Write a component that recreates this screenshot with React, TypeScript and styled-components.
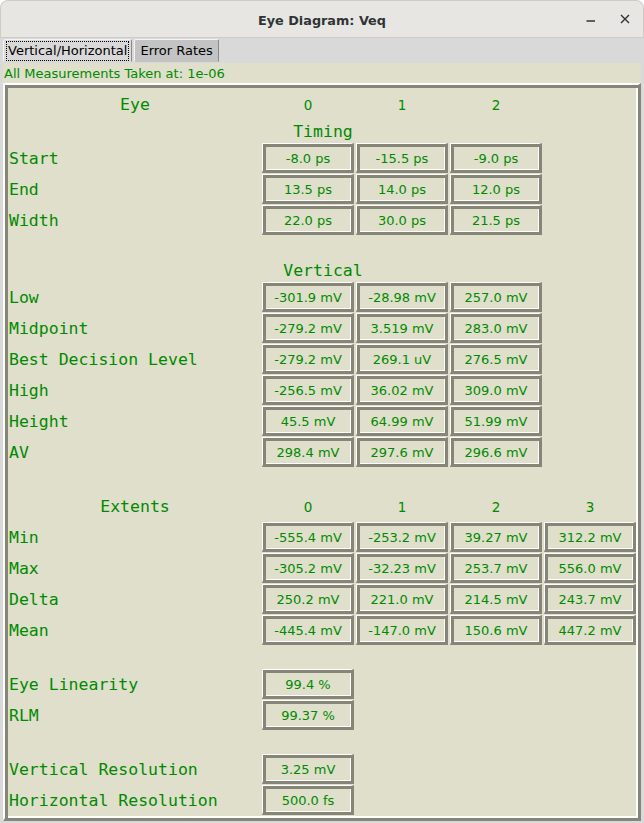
import React from "react";
import styled, { createGlobalStyle } from "styled-components";

const GREEN = "#008a00";
const BEIGE = "#dfdfcb";
const SHADE = "#858578";

const GlobalStyle = createGlobalStyle`
  html, body { margin: 0; padding: 0; background: #ffffff; }
  body { width: 644px; height: 823px; overflow: hidden; }
  #root { width: 644px; height: 823px; }
`;

const Window = styled.div`
  width: 644px;
  height: 823px;
  display: flex;
  flex-direction: column;
  background: #d9d9d9;
  border-radius: 8px 8px 0 0;
  overflow: hidden;
  box-sizing: border-box;
`;

const TitleBar = styled.div`
  height: 38px;
  box-sizing: border-box;
  display: grid;
  grid-template-columns: 1fr auto 1fr;
  align-items: center;
  background: #e8e6e3;
  border: 1px solid #cfccc8;
  border-radius: 8px 8px 0 0;
`;

const Title = styled.div`
  grid-column: 2;
  padding-top: 2px;
  font-family: "DejaVu Sans", sans-serif;
  font-weight: bold;
  font-size: 12.8px;
  color: #2e3436;
`;

const Controls = styled.div`
  grid-column: 3;
  justify-self: end;
  display: flex;
  gap: 4px;
  padding-right: 3px;
`;

const CtlButton = styled.div`
  width: 30px;
  height: 30px;
  display: flex;
  align-items: center;
  justify-content: center;
`;

const TabBar = styled.div`
  height: 24px;
  display: flex;
  align-items: flex-end;
  padding-left: 3px;
  background: #d9d9d9;
`;

const Tab = styled.div<{ $active?: boolean }>`
  height: 23px;
  box-sizing: border-box;
  display: flex;
  align-items: center;
  padding: 0 ${(p) => (p.$active ? "2px" : "5px")};
  margin-right: ${(p) => (p.$active ? "2px" : "0")};
  background: ${(p) => (p.$active ? "#d9d9d9" : "#c3c3c3")};
  border: 1px solid;
  border-color: #f4f4f4 #8a8a8a transparent #f4f4f4;
  border-radius: 2px 2px 0 0;
  font-family: "DejaVu Sans", sans-serif;
  font-size: 13px;
  color: #000;
`;

const Focus = styled.span`
  border: 1px dotted #000;
  padding: 1px 1px;
  line-height: 16px;
`;

const Page = styled.div`
  flex: 1;
  display: flex;
  flex-direction: column;
  padding: 1px 3px 2px 3px;
  min-height: 0;
`;

const InfoLabel = styled.div`
  height: 20px;
  line-height: 21px;
  padding-left: 1px;
  background: ${BEIGE};
  font-family: "DejaVu Sans", sans-serif;
  font-size: 13px;
  color: ${GREEN};
  white-space: nowrap;
`;

const Panel = styled.div`
  flex: 1;
  background: ${BEIGE};
  border-style: solid;
  border-width: 2px 3px 3px 2px;
  border-color: #ffffff ${SHADE} ${SHADE} #ffffff;
  box-shadow: inset 3px 3px 0 ${SHADE}, inset -2px -2px 0 #ffffff;
  padding: 3px 2px 2px 4px;
  min-height: 0;
`;

const Grid = styled.div`
  display: grid;
  grid-template-columns: 252px repeat(4, 94px);
  align-items: start;
`;

const Header = styled.div<{ $span: "label" | "all"; $h: number; $pt?: number }>`
  grid-column: ${(p) => (p.$span === "all" ? "1 / -1" : "1")};
  height: ${(p) => p.$h}px;
  box-sizing: border-box;
  padding-top: ${(p) => (p.$pt ?? 0) + 1}px;
  line-height: 24px;
  text-align: center;
  font-family: "DejaVu Sans Mono", monospace;
  font-size: 16.5px;
  color: ${GREEN};
`;

const ColHead = styled.div<{ $h: number; $pt?: number }>`
  height: ${(p) => p.$h}px;
  box-sizing: border-box;
  padding-top: ${(p) => (p.$pt ?? 0) + 1}px;
  line-height: 24px;
  text-align: center;
  font-family: "DejaVu Sans", sans-serif;
  font-size: 13.5px;
  color: ${GREEN};
`;

const Label = styled.div`
  grid-column: 1;
  height: 31px;
  box-sizing: border-box;
  padding-top: 1px;
  line-height: 30px;
  font-family: "DejaVu Sans Mono", monospace;
  font-size: 16.5px;
  color: ${GREEN};
  white-space: nowrap;
`;

const Value = styled.div`
  width: 92px;
  height: 30px;
  margin: 0 1px 1px 1px;
  box-sizing: border-box;
  border-style: solid;
  border-width: 1px 3px 3px 1px;
  border-color: #ffffff ${SHADE} ${SHADE} #ffffff;
  box-shadow: inset 3px 3px 0 ${SHADE}, inset -1px -1px 0 #ffffff;
  display: flex;
  align-items: center;
  justify-content: center;
  padding: 2px 0 0 2px;
  font-family: "DejaVu Sans", sans-serif;
  font-size: 13px;
  color: ${GREEN};
  white-space: nowrap;
`;

const Spacer = styled.div<{ $h: number }>`
  grid-column: 1 / -1;
  height: ${(p) => p.$h}px;
`;

type Row = [string, string[]];

const timing: Row[] = [
  ["Start", ["-8.0 ps", "-15.5 ps", "-9.0 ps"]],
  ["End", ["13.5 ps", "14.0 ps", "12.0 ps"]],
  ["Width", ["22.0 ps", "30.0 ps", "21.5 ps"]],
];

const vertical: Row[] = [
  ["Low", ["-301.9 mV", "-28.98 mV", "257.0 mV"]],
  ["Midpoint", ["-279.2 mV", "3.519 mV", "283.0 mV"]],
  ["Best Decision Level", ["-279.2 mV", "269.1 uV", "276.5 mV"]],
  ["High", ["-256.5 mV", "36.02 mV", "309.0 mV"]],
  ["Height", ["45.5 mV", "64.99 mV", "51.99 mV"]],
  ["AV", ["298.4 mV", "297.6 mV", "296.6 mV"]],
];

const extents: Row[] = [
  ["Min", ["-555.4 mV", "-253.2 mV", "39.27 mV", "312.2 mV"]],
  ["Max", ["-305.2 mV", "-32.23 mV", "253.7 mV", "556.0 mV"]],
  ["Delta", ["250.2 mV", "221.0 mV", "214.5 mV", "243.7 mV"]],
  ["Mean", ["-445.4 mV", "-147.0 mV", "150.6 mV", "447.2 mV"]],
];

const linearity: Row[] = [
  ["Eye Linearity", ["99.4 %"]],
  ["RLM", ["99.37 %"]],
];

const resolution: Row[] = [
  ["Vertical Resolution", ["3.25 mV"]],
  ["Horizontal Resolution", ["500.0 fs"]],
];

function Rows({ rows }: { rows: Row[] }) {
  return (
    <>
      {rows.map(([name, vals]) => (
        <React.Fragment key={name}>
          <Label>{name}</Label>
          {vals.map((v, i) => (
            <Value key={i}>{v}</Value>
          ))}
        </React.Fragment>
      ))}
    </>
  );
}

export default function App() {
  return (
    <>
      <GlobalStyle />
      <Window>
        <TitleBar>
          <Title>Eye Diagram: Veq</Title>
          <Controls>
            <CtlButton>
              <svg width="10" height="10" viewBox="0 0 10 10">
                <line x1="0.5" y1="7" x2="9" y2="7" stroke="#2e3436" strokeWidth="1.5" />
              </svg>
            </CtlButton>
            <CtlButton>
              <svg width="10" height="10" viewBox="0 0 10 10">
                <path d="M1 1 L9 9 M9 1 L1 9" stroke="#2e3436" strokeWidth="1.4" />
              </svg>
            </CtlButton>
          </Controls>
        </TitleBar>
        <TabBar>
          <Tab $active>
            <Focus>Vertical/Horizontal</Focus>
          </Tab>
          <Tab>Error Rates</Tab>
        </TabBar>
        <Page>
          <InfoLabel>All Measurements Taken at: 1e-06</InfoLabel>
          <Panel>
            <Grid>
              <Header $span="label" $h={31} $pt={4}>Eye</Header>
              <ColHead $h={31} $pt={4}>0</ColHead>
              <ColHead $h={31} $pt={4}>1</ColHead>
              <ColHead $h={31} $pt={4}>2</ColHead>
              <Header $span="all" $h={24}>Timing</Header>
              <Rows rows={timing} />
              <Spacer $h={22} />
              <Header $span="all" $h={24}>Vertical</Header>
              <Rows rows={vertical} />
              <Spacer $h={26} />
              <Header $span="label" $h={28}>Extents</Header>
              <ColHead $h={28}>0</ColHead>
              <ColHead $h={28}>1</ColHead>
              <ColHead $h={28}>2</ColHead>
              <ColHead $h={28}>3</ColHead>
              <Rows rows={extents} />
              <Spacer $h={23} />
              <Rows rows={linearity} />
              <Spacer $h={23} />
              <Rows rows={resolution} />
            </Grid>
          </Panel>
        </Page>
      </Window>
    </>
  );
}
